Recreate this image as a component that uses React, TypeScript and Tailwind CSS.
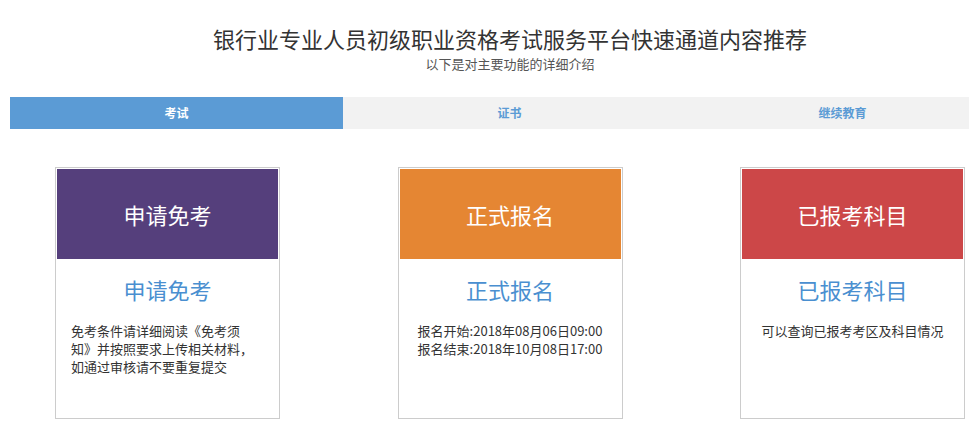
import type { CSSProperties } from "react";

const pageStyle: CSSProperties = {
  fontFamily:
    '"Microsoft YaHei", "Noto Sans CJK SC", "Liberation Sans", sans-serif',
};

interface Card {
  title: string;
  color: string;
  align: string;
  lines: string[];
}

const cards: Card[] = [
  {
    title: "申请免考",
    color: "bg-[#553f7c]",
    align: "text-left",
    lines: [
      "免考条件请详细阅读《免考须",
      "知》并按照要求上传相关材料，",
      "如通过审核请不要重复提交",
    ],
  },
  {
    title: "正式报名",
    color: "bg-[#e58633]",
    align: "text-center",
    lines: ["报名开始:2018年08月06日09:00", "报名结束:2018年10月08日17:00"],
  },
  {
    title: "已报考科目",
    color: "bg-[#cc4748]",
    align: "text-center",
    lines: ["可以查询已报考考区及科目情况"],
  },
];

const tabs = ["考试", "证书", "继续教育"];

export default function App() {
  return (
    <div className="w-full h-[433px] overflow-hidden bg-white" style={pageStyle}>
      <div className="w-[1000px] ml-[10px]">
        <header className="pt-[24px] text-center">
          <h1 className="text-[22px] leading-[28px] text-[#333]">
            银行业专业人员初级职业资格考试服务平台快速通道内容推荐
          </h1>
          <p className="mt-[4px] text-[13px] leading-[16px] text-[#555]">
            以下是对主要功能的详细介绍
          </p>
        </header>

        <nav className="mt-[25px] flex h-[32px] bg-[#f2f2f2]">
          {tabs.map((t, i) => (
            <div
              key={t}
              className={
                i === 0
                  ? "flex w-[333px] items-center justify-center bg-[#5b9bd5] text-[12px] font-bold text-white"
                  : "flex w-[333px] items-center justify-center text-[12px] font-bold text-[#5b9bd5]"
              }
            >
              {t}
            </div>
          ))}
        </nav>

        <div className="mt-[38px] flex justify-between px-[45px]">
          {cards.map((c) => (
            <div
              key={c.title}
              className="h-[252px] w-[225px] border border-[#ccc] p-[1px]"
            >
              <div
                className={`flex h-[90px] items-center justify-center text-[22px] text-white ${c.color}`}
              >
                {c.title}
              </div>
              <div className="pt-[14px] text-center text-[22px] leading-[32px] text-[#4a8fd0]">
                {c.title}
              </div>
              <div
                className={`mt-[17px] px-[14px] text-[13px] leading-[18px] text-[#333] ${c.align}`}
              >
                {c.lines.map((l) => (
                  <p key={l} className="whitespace-nowrap">
                    {l}
                  </p>
                ))}
              </div>
            </div>
          ))}
        </div>
      </div>
    </div>
  );
}
